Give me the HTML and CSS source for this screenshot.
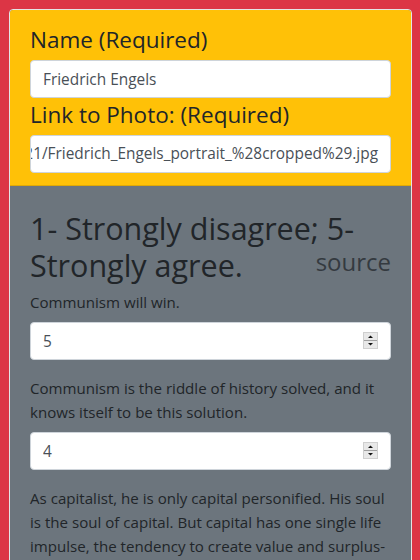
FILE: index.html
```html
<!DOCTYPE html>
<html lang="en">
<head>
<meta charset="utf-8">
<title>Quiz</title>
<link rel="stylesheet" href="styles.css">
</head>
<body>
<div class="card">
  <div class="card-header">
    <label class="big-label" for="name">Name (Required)</label>
    <input class="form-control" id="name" type="text" value="Friedrich Engels">
    <label class="big-label label-gap">Link to Photo: (Required)</label>
    <div class="form-control scrolled"><span>https://upload.wikimedia.org/wikipedia/commons/2/21/Friedrich_Engels_portrait_%28cropped%29.jpg</span></div>
  </div>
  <div class="card-body">
    <h2 class="title">1- Strongly disagree; 5- Strongly agree.<a class="source">source</a></h2>
    <div class="form-group">
      <p class="question">Communism will win.</p>
      <div class="num-wrap">
        <input class="form-control" type="text" value="5">
        <span class="spin"><svg width="15" height="17" viewBox="0 0 15 17"><rect x="0.5" y="0.5" width="14" height="16" fill="#e8e8e8" stroke="#cfcfcf"/><line x1="1" y1="8.5" x2="14" y2="8.5" stroke="#a0a0a0"/><polygon points="5,6 10,6 7.5,3.5" fill="#111"/><polygon points="5,11 10,11 7.5,13.5" fill="#111"/></svg></span>
      </div>
    </div>
    <div class="form-group">
      <p class="question">Communism is the riddle of history solved, and it knows itself to be this solution.</p>
      <div class="num-wrap">
        <input class="form-control" type="text" value="4">
        <span class="spin"><svg width="15" height="17" viewBox="0 0 15 17"><rect x="0.5" y="0.5" width="14" height="16" fill="#e8e8e8" stroke="#cfcfcf"/><line x1="1" y1="8.5" x2="14" y2="8.5" stroke="#a0a0a0"/><polygon points="5,6 10,6 7.5,3.5" fill="#111"/><polygon points="5,11 10,11 7.5,13.5" fill="#111"/></svg></span>
      </div>
    </div>
    <div class="form-group">
      <p class="question">As capitalist, he is only capital personified. His soul is the soul of capital. But capital has one single life impulse, the tendency to create value and surplus-value, to make its constant factor, the means of production, absorb the greatest possible amount of surplus-labour.</p>
    </div>
  </div>
</div>
</body>
</html>
```
FILE: styles.css
```css
html, body {
  margin: 0;
  padding: 0;
}
body {
  background: #dc3545;
  font-family: "Open Sans", "Noto Sans", sans-serif;
  color: #212529;
  height: 560px;
  overflow: hidden;
}
.card {
  margin: 9px 8px 0 9px;
  border: 1px solid #e4e4e4;
  border-radius: 4px;
  overflow: hidden;
  min-height: 600px;
  background: #6c757d;
}
.card-header {
  background: #ffc107;
  padding: 15px 20px 12px;
  border-bottom: 1px solid rgba(0,0,0,0.12);
  display: flex;
  flex-direction: column;
}
.big-label {
  font-size: 22.5px;
  line-height: 29px;
  margin-bottom: 6px;
  color: #212529;
}
.label-gap {
  margin-top: 2px;
}
.form-control {
  box-sizing: border-box;
  display: block;
  width: 100%;
  height: 38px;
  padding: 0 12px;
  font-family: inherit;
  font-size: 15.4px;
  line-height: 36px;
  color: #495057;
  background: #fff;
  border: 1px solid #ced4da;
  border-radius: 4px;
  margin: 0;
  outline: none;
}
.scrolled {
  display: flex;
  justify-content: flex-end;
  overflow: hidden;
  white-space: nowrap;
}
.scrolled span {
  flex: none;
}
.card-body {
  padding: 24px 20px 20px;
}
.title {
  margin: 0 0 6px;
  font-weight: 400;
  font-size: 30.5px;
  line-height: 37px;
  color: #212529;
}
.source {
  float: right;
  font-size: 24px;
  line-height: 24px;
  color: #343a40;
  margin-top: 3px;
}
.form-group {
  margin-bottom: 16px;
}
.question {
  margin: 0 0 8px;
  font-size: 15.1px;
  line-height: 24px;
}
.num-wrap {
  position: relative;
}
.spin {
  position: absolute;
  right: 13px;
  top: 10px;
  width: 15px;
  height: 17px;
  display: block;
}
.spin svg {
  display: block;
}
```
